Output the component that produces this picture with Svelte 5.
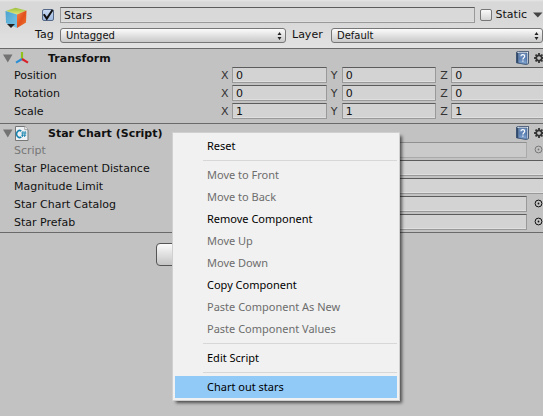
<script>
  const axes = ['X', 'Y', 'Z'];
  const transform = [
    { label: 'Position', values: ['0', '0', '0'] },
    { label: 'Rotation', values: ['0', '0', '0'] },
    { label: 'Scale', values: ['1', '1', '1'] }
  ];
  const properties = [
    { label: 'Script', picker: true, disabled: true },
    { label: 'Star Placement Distance' },
    { label: 'Magnitude Limit' },
    { label: 'Star Chart Catalog', picker: true },
    { label: 'Star Prefab', picker: true }
  ];
  const menu = [
    [{ label: 'Reset' }],
    [
      { label: 'Move to Front', disabled: true },
      { label: 'Move to Back', disabled: true },
      { label: 'Remove Component' },
      { label: 'Move Up', disabled: true },
      { label: 'Move Down', disabled: true },
      { label: 'Copy Component' },
      { label: 'Paste Component As New', disabled: true },
      { label: 'Paste Component Values', disabled: true }
    ],
    [{ label: 'Edit Script' }],
    [{ label: 'Chart out stars', active: true }]
  ];
</script>

{#snippet arrows()}
  <svg class="arrows" width="5" height="8" viewBox="0 0 5 8" aria-hidden="true">
    <path d="M2.5 0 4.5 3H.5zM2.5 8 4.5 5H.5z" fill="#222" />
  </svg>
{/snippet}

{#snippet foldout()}
  <svg class="fold" width="10" height="9" viewBox="0 0 10 9" aria-hidden="true">
    <path d="M0 0.5h9.5L4.8 8.5z" fill="#737373" />
  </svg>
{/snippet}

{#snippet tools()}
  <button class="icon help" aria-label="Open reference">
    <svg width="13" height="14" viewBox="0 0 13 14">
      <defs>
        <linearGradient id="book" x1="0" y1="0" x2="0" y2="1">
          <stop offset="0" stop-color="#7898c2" />
          <stop offset="0.5" stop-color="#5b80b4" />
          <stop offset="1" stop-color="#8aabd4" />
        </linearGradient>
      </defs>
      <path d="M.5 1.2 2.3.4H12.5V12.6L10.5 13.5.5 11.8z" fill="#e4ebf3" stroke="#263c5c" stroke-width=".8" />
      <path d="M.5 1.2 2.3 2v10.3L.5 11.8z" fill="#304a6e" />
      <path d="M2.6 2H11v11.2L2.6 12z" fill="url(#book)" stroke="#35547f" stroke-width=".6" />
      <path d="M5 5.3c0-2.3 3.7-2.2 3.7 0 0 1.4-1.8 1.5-1.8 3.1M6.9 9.6v1.2" fill="none" stroke="#fff" stroke-width="1.1" />
    </svg>
  </button>
  <button class="icon gear" aria-label="Component options">
    <svg width="10" height="10" viewBox="-5 -5 10 10">
      <circle r="2.7" fill="none" stroke="#333" stroke-width="1.7" />
      {#each [0, 45, 90, 135, 180, 225, 270, 315] as angle}
        <path d="M-.9-4.9H.9V-3H-.9z" fill="#333" transform="rotate({angle})" />
      {/each}
    </svg>
  </button>
{/snippet}

<main>
  <header>
    <svg class="cube" width="23" height="22" viewBox="0 0 23 22" aria-hidden="true">
      <defs>
        <linearGradient id="top" x1="0" y1="0" x2="0" y2="1">
          <stop offset="0" stop-color="#9cc03c" />
          <stop offset="1" stop-color="#e0e67a" />
        </linearGradient>
        <linearGradient id="left" x1="0" y1="0" x2="1" y2="1">
          <stop offset="0" stop-color="#4aa3cf" />
          <stop offset="1" stop-color="#7cc4e6" />
        </linearGradient>
        <linearGradient id="right" x1="0" y1="0" x2="1" y2="1">
          <stop offset="0" stop-color="#f5844c" />
          <stop offset="0.5" stop-color="#e2501c" />
          <stop offset="1" stop-color="#f07a30" />
        </linearGradient>
      </defs>
      <path d="M.5 4 10.5.7 21.5 3.5 12 7.5z" fill="url(#top)" />
      <path d="M.5 4 12 7.5V21L1 16z" fill="url(#left)" />
      <path d="M21.5 3.5 12 7.5V21L21 15.5z" fill="url(#right)" />
      <path d="M2 17h8L6 21z" fill="#222" />
    </svg>
    <div class="head-rows">
      <div class="name-row">
        <label class="tick on">
          <input type="checkbox" checked aria-label="Active" />
          <svg width="12" height="12" viewBox="0 0 12 12" aria-hidden="true">
            <path d="M1.8 5.2 4.8 9.6 10.5 1" fill="none" stroke="#111" stroke-width="2" />
          </svg>
        </label>
        <input class="field name" value="Stars" aria-label="Name" />
        <label class="tick static"><input type="checkbox" /><span>Static</span></label>
        <svg class="more" width="10" height="6" viewBox="0 0 10 6" aria-hidden="true">
          <path d="M0 .5h9.5L4.8 5.5z" fill="#444" />
        </svg>
      </div>
      <div class="tag-row">
        <label for="tag">Tag</label>
        <div class="popup tag">
          <select id="tag"><option>Untagged</option></select>
          {@render arrows()}
        </div>
        <label for="layer">Layer</label>
        <div class="popup layer">
          <select id="layer"><option>Default</option></select>
          {@render arrows()}
        </div>
      </div>
    </div>
  </header>

  <section class="spaced">
    <div class="title">
      {@render foldout()}
      <svg class="kind" width="14" height="14" viewBox="0 0 14 14" aria-hidden="true">
        <path d="M7 8V1" stroke="#8fc31c" stroke-width="2.2" />
        <path d="M7 8 1 11.6" stroke="#2c8fd6" stroke-width="2.2" />
        <path d="M7 8 13 11.6" stroke="#d9222a" stroke-width="2.2" />
      </svg>
      <h2>Transform</h2>
      {@render tools()}
    </div>
    {#each transform as row}
      <div class="row vector">
        <span class="label">{row.label}</span>
        {#each axes as axis, i}
          <label class="axis"><span>{axis}</span><input class="field" value={row.values[i]} /></label>
        {/each}
      </div>
    {/each}
  </section>

  <section>
    <div class="title">
      {@render foldout()}
      <svg class="kind" width="14" height="15" viewBox="0 0 14 15" aria-hidden="true">
        <path d="M.5.5h9.3l3.2 3.2v10.8H.5z" fill="#eef2f4" stroke="#777" />
        <path d="M9.8.5v3.2H13" fill="#fff" stroke="#888" stroke-width=".8" />
        <path d="M6.3 5.2A3 3.4 0 1 0 6.3 10.8" fill="none" stroke="#1782ad" stroke-width="1.6" />
        <path d="M8 5 7.4 11M10.2 5 9.6 11M6.3 7H11.4M6.1 9.2H11.2" stroke="#1782ad" stroke-width=".9" />
      </svg>
      <h2>Star Chart (Script)</h2>
      {@render tools()}
    </div>
    {#each properties as prop}
      <label class="row" class:dim={prop.disabled}>
        <span class="label">{prop.label}</span>
        <input class="field value" class:object={prop.picker} disabled={prop.disabled} />
        {#if prop.picker}
          <svg class="pick" width="9" height="9" viewBox="0 0 9 9" aria-hidden="true">
            <circle cx="4.5" cy="4.5" r="3.4" fill="none" stroke="currentColor" />
            <circle cx="4.5" cy="4.5" r=".9" fill="currentColor" />
          </svg>
        {/if}
      </label>
    {/each}
  </section>

  <footer><button class="add" aria-label="Add Component"></button></footer>

  <div class="menu" role="menu">
    {#each menu as group}
      <div class="group" role="group">
        {#each group as item}
          <button role="menuitem" disabled={item.disabled} class:active={item.active}>{item.label}</button>
        {/each}
      </div>
    {/each}
  </div>
</main>

<style>
  :global(body) {
    background: #c2c2c2;
  }
  main {
    position: relative;
    min-height: 100vh;
    overflow: hidden;
    background: #c2c2c2;
    color: #111;
    font: 11px/16px 'DejaVu Sans', Verdana, sans-serif;
  }
  input,
  select,
  button {
    font: inherit;
    color: inherit;
    margin: 0;
    box-sizing: border-box;
  }
  header {
    display: flex;
    height: 48px;
    box-sizing: border-box;
    padding-top: 7px;
    background: linear-gradient(#e6e6e6 0, #d8d8d8 2px, #d8d8d8 20px, #e2e2e2 100%);
  }
  .cube {
    flex: none;
    margin-left: 5px;
  }
  .head-rows {
    flex: 1;
    min-width: 0;
    display: flex;
    flex-direction: column;
    gap: 4px;
  }
  .name-row,
  .tag-row {
    display: flex;
    align-items: center;
    height: 16px;
  }
  .name-row {
    padding-left: 14px;
  }
  .tick {
    display: flex;
    align-items: center;
    position: relative;
  }
  .tick input {
    appearance: none;
    width: 12px;
    height: 12px;
    border: 1px solid #777;
    border-radius: 2px;
    background: linear-gradient(#fafafa, #d4d4d4);
  }
  .tick.on input {
    border-color: #566a88;
    background: linear-gradient(#c8d9f2, #9fb9e0);
  }
  .tick svg {
    position: absolute;
    inset: 0;
  }
  .tick.on {
    margin-right: 6px;
  }
  .static {
    margin-left: 5px;
    gap: 4px;
  }
  .more {
    margin-left: 6px;
  }
  .field {
    height: 16px;
    min-width: 0;
    flex: 1;
    padding: 1px 3px 0;
    border: 1px solid #999;
    border-top-color: #5c5c5c;
    border-radius: 0;
    outline: 0;
    background: #d3d3d3;
    box-shadow: inset 0 -1px #dfdfdf;
  }
  .name {
    background: #d9d9d9;
  }
  .tag-row label {
    flex: none;
  }
  .tag-row label:first-child {
    width: 25px;
    padding-left: 7px;
  }
  .tag-row label:nth-of-type(2) {
    width: 39px;
    padding-left: 6px;
  }
  .popup {
    position: relative;
    display: flex;
    min-width: 0;
  }
  .tag {
    flex: 226;
  }
  .layer {
    flex: 212;
  }
  .popup select {
    appearance: none;
    width: 100%;
    height: 15px;
    padding: 0 16px 0 5px;
    border: 1px solid #777;
    border-radius: 3px;
    outline: 0;
    background: linear-gradient(#fbfbfb, #c9c9c9);
    font-size: 10px;
    line-height: 13px;
  }
  .arrows {
    position: absolute;
    right: 4px;
    top: 4px;
  }
  section,
  footer {
    border-top: 1px solid #6a6a6a;
  }
  .spaced {
    padding-bottom: 2px;
  }
  .title {
    display: flex;
    align-items: center;
    height: 18px;
    padding-left: 3px;
  }
  .fold,
  .kind {
    flex: none;
  }
  .kind {
    margin-left: 2px;
  }
  h2 {
    flex: 1;
    margin: 0 0 0 19px;
    padding-top: 2px;
    font-size: 11px;
  }
  .icon {
    flex: none;
    display: flex;
    padding: 0;
    border: 0;
    background: none;
  }
  .help {
    margin-right: 5px;
  }
  .gear {
    margin-right: -1px;
  }
  .row {
    display: flex;
    align-items: flex-start;
    height: 18px;
    padding-left: 14px;
    line-height: 18px;
  }
  .vector {
    gap: 4px;
    margin-right: -3px;
  }
  .label {
    flex: none;
    width: 218px;
  }
  .vector .label {
    width: 203px;
  }
  .axis {
    display: flex;
    flex: 1;
    min-width: 0;
  }
  .axis span {
    width: 11px;
    color: #333;
  }
  .value:not(.object) {
    margin-right: -3px;
  }
  .pick {
    flex: none;
    margin: 3px 0 0 7px;
  }
  .dim {
    color: #777;
  }
  .dim .field {
    background: #cacaca;
    border-color: #aaa;
    border-top-color: #909090;
    box-shadow: none;
  }
  footer {
    display: flex;
    justify-content: center;
    padding-top: 10px;
  }
  .add {
    width: 232px;
    height: 23px;
    border: 1px solid #555;
    border-radius: 4px;
    background: linear-gradient(#fbfbfb, #c4c4c4);
  }
  .menu {
    position: absolute;
    left: 172px;
    top: 132px;
    width: 228px;
    box-sizing: border-box;
    padding: 2px;
    border: 1px solid #d0d0d0;
    background: #f1f1f1;
    box-shadow: 3px 3px 3px -1px #0009;
    color: #000;
    font: 11px/22px 'Noto Sans', 'Segoe UI', sans-serif;
  }
  .group + .group::before {
    content: '';
    display: block;
    height: 1px;
    margin: 3px 0 3px 28px;
    background: #d7d7d7;
  }
  .menu button {
    display: block;
    width: 100%;
    height: 22px;
    padding: 0 0 0 32px;
    border: 0;
    background: none;
    text-align: left;
  }
  .menu button:disabled {
    color: #6d6d6d;
  }
  .menu button.active {
    background: #91c9f7;
  }
</style>
